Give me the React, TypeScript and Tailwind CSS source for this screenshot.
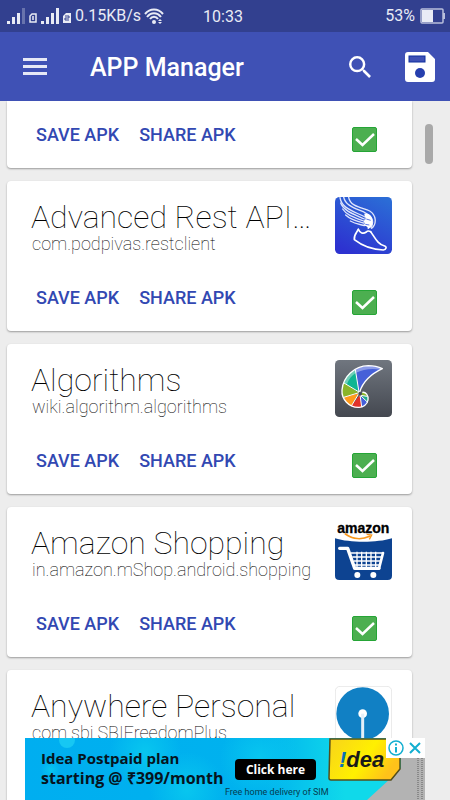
import React from 'react';

const apps = [
{
  name: 'Advanced Rest API…',
  pkg: 'com.podpivas.restclient',
  Icon: RestIcon,
  collapsed: false
},
{
  name: 'Algorithms',
  pkg: 'wiki.algorithm.algorithms',
  Icon: AlgorithmsIcon,
  collapsed: false
},
{
  name: 'Amazon Shopping',
  pkg: 'in.amazon.mShop.android.shopping',
  Icon: AmazonIcon,
  collapsed: false
},
{
  name: 'Anywhere Personal',
  pkg: 'com.sbi.SBIFreedomPlus',
  Icon: BankIcon,
  collapsed: true
}];

function RestIcon() {
  return (
    <svg viewBox="0 0 171 171" className="w-[57px] h-[57px] shrink-0" aria-hidden="true">
      <defs>
        <linearGradient id="rest" x1="0.8" y1="0" x2="0.3" y2="1">
          <stop offset="0" stopColor="#2b6cd6" />
          <stop offset="1" stopColor="#2d32d0" />
        </linearGradient>
      </defs>
      <rect width="171" height="171" rx="14" fill="url(#rest)" />
      <g fill="none" stroke="#fff" strokeWidth="5" strokeLinecap="round" strokeLinejoin="round">
        <path d="M70 97 C64 108 56 114 58 128 C76 142 105 158 145 159 C154 158 156 149 149 147 C128 142 120 122 107 104" />
        <path d="M70 97 C75 108 84 112 94 105 C98 100 103 102 107 104" />
        <g strokeWidth="4" stroke="#dfe5fb">
          <path d="M41 1 C46 30 84 32 104 42 C124 54 126 80 110 94" />
          <path d="M26 0 C32 30 70 36 92 48 C112 58 118 74 108 92" />
          <path d="M15 2 C20 34 54 42 90 60" />
          <path d="M17 18 C28 44 58 52 88 66" />
          <path d="M23 36 C36 56 60 62 86 72" />
          <path d="M32 54 C46 68 64 72 86 78" />
          <path d="M46 72 C60 80 74 82 88 86" />
        </g>
      </g>
      <path d="M88 50 C102 48 114 58 112 74 C116 80 108 92 98 97 C100 86 90 88 84 84 C96 80 82 76 88 70 C96 64 88 60 88 50Z" fill="#fff" />
      <path d="M94 66 L107 70 M91 82 L103 84" stroke="#5f7be4" strokeWidth="3" />
    </svg>);
}

function AlgorithmsIcon() {
  return (
    <svg viewBox="0 0 171 171" className="w-[57px] h-[57px] shrink-0" aria-hidden="true">
      <defs>
        <linearGradient id="algo" x1="0" y1="0" x2="0" y2="1">
          <stop offset="0" stopColor="#70767f" />
          <stop offset="1" stopColor="#444850" />
        </linearGradient>
      </defs>
      <rect width="171" height="171" rx="13" fill="url(#algo)" />
      <g strokeLinejoin="round">
        <path d="M142 26 C115 14 85 14 61 29 L72 96 C84 64 108 42 142 26Z" fill="#4660d8" />
        <path d="M142 26 C115 14 85 14 61 29 L63 38 C84 28 110 24 136 29Z" fill="#8b9be8" />
        <path d="M61 29 C42 38 32 51 27 69 L72 97Z" fill="#0fb593" />
        <path d="M61 29 C42 38 32 51 27 69 L36 72 C42 56 50 46 63 38Z" fill="#6fcfb8" />
        <path d="M27 69 C19 84 19 98 26 112 L72 98Z" fill="#8ab52a" />
        <path d="M26 112 C30 124 38 133 49 138 L72 100Z" fill="#ff9a1c" />
        <path d="M49 138 C58 143 70 144 80 141 L75 104Z" fill="#e2322a" />
        <path d="M80 141 C88 139 94 134 98 127 L76 106Z" fill="#4660d8" />
        <path d="M98 127 C101 121 100 114 96 109 L77 106Z" fill="#1bab8d" />
        <path d="M96 109 C95 101 90 96 82 97 L79 106Z" fill="#8ab52a" />
        <g fill="none" stroke="#fff" strokeWidth="4">
          <path d="M82 97 C92 95 101 106 99 120 C97 134 84 143 70 142 C42 142 19 118 21 90 C24 50 58 18 100 17 C116 17 130 20 142 26 C108 42 84 64 74 96" />
          <path d="M61 29 L72 96 L27 69 M72 98 L26 112 M72 100 L49 138 M75 104 L80 141 M76 106 L98 127 M77 106 L96 109" strokeWidth="3" />
        </g>
      </g>
      <circle cx="75" cy="102" r="5" fill="#434954" />
    </svg>);
}

function AmazonIcon() {
  return (
    <svg viewBox="0 0 171 171" className="w-[57px] h-[57px] shrink-0 overflow-visible" aria-hidden="true">
      <rect width="171" height="171" rx="13" fill="#fff" />
      <path d="M0 46 C45 60 126 60 171 46 V158 Q171 171 158 171 H13 Q0 171 0 158Z" fill="#0d4391" />
      <text x="85" y="29" textAnchor="middle" className="font-['Liberation_Sans',sans-serif] font-bold" fontSize="42" stroke="#000" strokeWidth="1">amazon</text>
      <path d="M31 33 C54 50 82 50 104 40" fill="none" stroke="#f8981d" strokeWidth="5" strokeLinecap="round" />
      <path d="M95 34 L110 36 L103 49" fill="none" stroke="#f8981d" strokeWidth="4" />
      <g fill="none" stroke="#fff">
        <path d="M14 76 H38 L59 136 H132" strokeWidth="10" strokeLinejoin="round" strokeLinecap="round" />
        <path d="M144 90 L132 136" strokeWidth="8" strokeLinecap="round" />
        <path d="M48 90 H144 M52 102 H138 M56 114 H135 M60 126 H133" strokeWidth="4" />
        <path d="M66 86 V132 M80 86 V132 M94 86 V132 M108 86 V132 M122 86 V132" strokeWidth="4" />
      </g>
      <circle cx="67" cy="156" r="9" fill="#fff" />
      <circle cx="115" cy="156" r="9" fill="#fff" />
    </svg>);
}

function BankIcon() {
  return (
    <svg viewBox="0 0 171 171" className="w-[57px] h-[57px] shrink-0" aria-hidden="true">
      <rect x="1" y="1" width="169" height="169" rx="14" fill="#fff" stroke="#e8e8e8" strokeWidth="3" />
      <circle cx="83" cy="83" r="79" fill="#1180c4" />
      <circle cx="83" cy="83" r="13" fill="#fff" />
      <path d="M83 83 V165" stroke="#e4eff8" strokeWidth="9" />
    </svg>);
}

function Signal({ dim }: {dim?: boolean;}) {
  return (
    <svg viewBox="0 0 19 17" className="w-[19px] h-[17px]" fill="#e9ebf5" aria-hidden="true">
      <rect x="0" y="13" width="3" height="3" />
      <rect x="5" y="9" width="3" height="7" />
      <rect x="10" y="5" width="3" height="11" />
      <rect x="15" y="0" width="3" height="16" opacity={dim ? 0.3 : 1} />
    </svg>);
}

function StatusBar() {
  return (
    <div className="relative h-8 shrink-0 flex items-center justify-between bg-[#32408f] pl-[7px] pr-[5px] text-[#e9ebf5] text-base">
      <div className="flex items-center">
        <Signal dim />
        <svg viewBox="0 0 8 10" className="w-2 h-[10px] ml-[3px] mt-1" aria-hidden="true">
          <path d="M1 3 L3 1 H7 V9 H1Z M4 3 V7" fill="none" stroke="#e9ebf5" strokeWidth="1.5" />
        </svg>
        <span className="ml-1 flex"><Signal /></span>
        <svg viewBox="0 0 8 10" className="w-2 h-[10px] ml-[3px] mt-1" aria-hidden="true">
          <path d="M0 3 L3 0 H8 V10 H0Z" fill="#e9ebf5" />
          <path d="M2 3 H6 V5 H2 V7 H6" fill="none" stroke="#32408f" strokeWidth="1" />
        </svg>
        <span className="ml-1">0.15KB/s</span>
        <svg viewBox="0 0 20 17" className="w-5 h-[17px] ml-[3px]" fill="none" stroke="#e9ebf5" strokeWidth="2" aria-hidden="true">
          <path d="M1 6 C6 0 14 0 19 6 M3 9 C7 4 13 4 17 9 M6 11 C8 8 12 8 14 11" />
          <circle cx="10" cy="14" r="2" fill="#e9ebf5" stroke="none" />
          <path d="M14 13 L16 11 L18 13Z M14 14 L16 16 L18 14Z" fill="#e9ebf5" stroke="none" />
        </svg>
      </div>
      <div className="absolute inset-x-0 text-center pointer-events-none pr-1 pt-[2px]">10:33</div>
      <div className="flex items-center gap-[5px]">
        <span>53%</span>
        <svg viewBox="0 0 25 16" className="w-[25px] h-4" aria-hidden="true">
          <rect x="1" y="1" width="22" height="14" rx="1" fill="none" stroke="#b9bfdc" strokeWidth="1.5" />
          <rect x="2" y="2" width="11" height="12" fill="#e9ebf5" />
          <path d="M24 5 V11" stroke="#b9bfdc" strokeWidth="2" />
        </svg>
      </div>
    </div>);
}

function Toolbar() {
  return (
    <header className="h-[69px] shrink-0 flex items-center bg-[#3f51b5] pl-[23px] pr-[14px] text-white">
      <button aria-label="Menu">
        <svg viewBox="0 0 24 17" className="w-6 h-[17px]" fill="#e6e8f6" aria-hidden="true">
          <rect width="24" height="3" />
          <rect y="7" width="24" height="3" />
          <rect y="14" width="24" height="3" />
        </svg>
      </button>
      <h1 className="ml-[43px] flex-1 pt-[2px] text-[25px] leading-8 font-medium">APP Manager</h1>
      <button aria-label="Search">
        <svg viewBox="3 3 17.5 17.5" className="w-[22px] h-[22px]" fill="#fff" aria-hidden="true">
          <path d="M15.5 14h-.79l-.28-.27A6.47 6.47 0 0 0 16 9.5 6.5 6.5 0 1 0 9.5 16c1.61 0 3.09-.59 4.23-1.57l.27.28v.79l5 4.99L20.49 19l-4.99-5zm-6 0C7.01 14 5 11.99 5 9.5S7.01 5 9.5 5 14 7.01 14 9.5 11.99 14 9.5 14z" />
        </svg>
      </button>
      <button aria-label="Save" className="ml-[33px]">
        <svg viewBox="0 0 32 32" className="w-8 h-8" aria-hidden="true">
          <path d="M3 1 H24 L31 8 V28 Q31 31 28 31 H4 Q1 31 1 28 V4 Q1 1 4 1Z" fill="#fff" />
          <rect x="5" y="5" width="16" height="6" fill="#3f51b5" stroke="#0e2f9e" strokeWidth="1" />
          <circle cx="16" cy="22" r="5" fill="#263fae" />
        </svg>
      </button>
    </header>);
}

function Actions({ id }: {id: string;}) {
  return (
    <div className="h-[25px] flex items-start pl-[5px] pr-[15px] text-[#3248b2]">
      <button className="text-lg leading-4 font-medium">SAVE APK</button>
      <button className="ml-5 text-lg leading-4 font-medium">SHARE APK</button>
      <label htmlFor={id} className="relative ml-auto block w-[25px] h-[25px]">
        <input
          id={id}
          type="checkbox"
          aria-label="Select app"
          defaultChecked
          className="peer block appearance-none w-[25px] h-[25px] rounded-xs border-2 border-gray-500 checked:border checked:border-[#25a536] checked:bg-[#4caf50]" />

        <svg viewBox="0 0 25 25" className="absolute inset-0 hidden peer-checked:block" fill="none" stroke="#fff" strokeWidth="2.5" aria-hidden="true">
          <path d="M4 12 L10.5 18 L22 7" />
        </svg>
      </label>
    </div>);
}

function AdBanner() {
  return (
    <aside className="absolute bottom-0 left-1/2 -translate-x-1/2 w-[400px] h-[62px] overflow-hidden bg-[#00aeef] font-['Open_Sans',sans-serif]">
      <svg viewBox="0 0 400 62" className="absolute inset-0 w-full h-full" aria-hidden="true">
        <defs>
          <linearGradient id="adBg">
            <stop offset="0" stopColor="#00aef0" />
            <stop offset="0.6" stopColor="#00b2ee" />
            <stop offset="0.8" stopColor="#10d9ea" />
          </linearGradient>
          <radialGradient id="adGlow">
            <stop offset="0" stopColor="#08c6ef" />
            <stop offset="1" stopColor="#08c6ef" stopOpacity="0" />
          </radialGradient>
          <linearGradient id="adBadge" x1="0" y1="0" x2="1" y2="0.4">
            <stop offset="0" stopColor="#f8d31c" />
            <stop offset="0.6" stopColor="#fff000" />
            <stop offset="1" stopColor="#ffc21a" />
          </linearGradient>
        </defs>
        <rect width="400" height="62" fill="url(#adBg)" />
        <circle cx="42" cy="2" r="8" fill="#16c7f3" />
        <circle cx="120" cy="14" r="36" fill="url(#adGlow)" />
        <circle cx="162" cy="52" r="38" fill="url(#adGlow)" />
        <circle cx="235" cy="20" r="40" fill="url(#adGlow)" />
        <circle cx="26" cy="32" r="10" fill="url(#adGlow)" />
        <path d="M342 62 L366 40 L376 30 V0 H400 V62Z" fill="#b3b3b3" />
        <path d="M305 1 H375 V31 L366 42 H306 Q304 42 304 40Z" fill="url(#adBadge)" stroke="#544d1b" strokeWidth="1.5" />
        <path d="M393 20 V61 M397 20 V61" stroke="#888" strokeWidth="2" strokeDasharray="1 1" />
      </svg>
      <div className="relative h-full flex">
        <p className="w-[210px] pl-4 pt-[10px] leading-5 font-bold text-[#061420] whitespace-nowrap">
          <span className="text-[15px]">Idea Postpaid plan</span>
          <br />
          starting @ ₹399/month
        </p>
        <div className="w-[94px] pt-[21px] flex flex-col items-start">
          <button className="w-[81px] h-[21px] rounded-sm bg-black text-white text-xs font-bold">
            Click here
          </button>
          <p className="-ml-[10px] mt-[6px] text-[9px] leading-3 text-[#063b50] whitespace-nowrap font-[Roboto,sans-serif]">Free home delivery of SIM</p>
        </div>
        <p className="pl-[10px] pt-2 text-[22px] leading-7 font-bold italic text-[#1a1a1a] font-['Liberation_Sans',sans-serif]">
          <span className="text-[#0a70b8]">!</span>dea
        </p>
      </div>
      <div className="absolute top-0 right-0 w-[39px] h-5 bg-white flex items-center justify-between px-[2px]">
        <button aria-label="Ad info">
          <svg viewBox="0 0 16 16" className="w-4 h-4" fill="none" stroke="#12aed0" aria-hidden="true">
            <circle cx="8" cy="8" r="7" strokeWidth="1.5" />
            <path d="M8 3.5 V5.5 M8 7 V12.5" strokeWidth="2" />
          </svg>
        </button>
        <button aria-label="Close ad">
          <svg viewBox="0 0 16 16" className="w-4 h-4" fill="none" stroke="#12aed0" strokeWidth="2" aria-hidden="true">
            <path d="M3 3 L13 13 M13 3 L3 13" />
          </svg>
        </button>
      </div>
    </aside>);
}

export default function App() {
  return (
    <div className="relative h-screen flex flex-col overflow-hidden bg-[#ededed] font-[Roboto,sans-serif]">
      <StatusBar />
      <Toolbar />
      <main className="relative flex-1 min-h-0 overflow-hidden pl-[7px] pr-[38px] flex flex-col gap-[13px]">
        <section className="shrink-0 bg-white rounded-b-sm shadow-[0_1px_2px_rgba(0,0,0,0.35)] pt-[26px] pb-4 pl-6 pr-5">
          <Actions id="select-first" />
        </section>
        {apps.map(({ name, pkg, Icon, collapsed }) =>
        <section key={pkg} className="shrink-0 min-h-[150px] bg-white rounded-sm shadow-[0_1px_2px_rgba(0,0,0,0.35)] pt-4 pb-4 pl-6 pr-5">
            <div className="h-[58px] flex justify-between">
              <div className="pt-1 whitespace-nowrap">
                <h2 className="text-[32px] leading-8 font-thin text-black">{name}</h2>
                <p className="pl-px text-lg leading-[22px] font-thin text-black">{pkg}</p>
              </div>
              <Icon />
            </div>
            {!collapsed &&
          <div className="mt-[35px]">
                <Actions id={pkg} />
              </div>
          }
          </section>
        )}
        <div className="absolute top-[23px] right-[17px] w-2 h-10 rounded-full bg-[#a9a9a9]" />
      </main>
      <AdBanner />
    </div>);
}
